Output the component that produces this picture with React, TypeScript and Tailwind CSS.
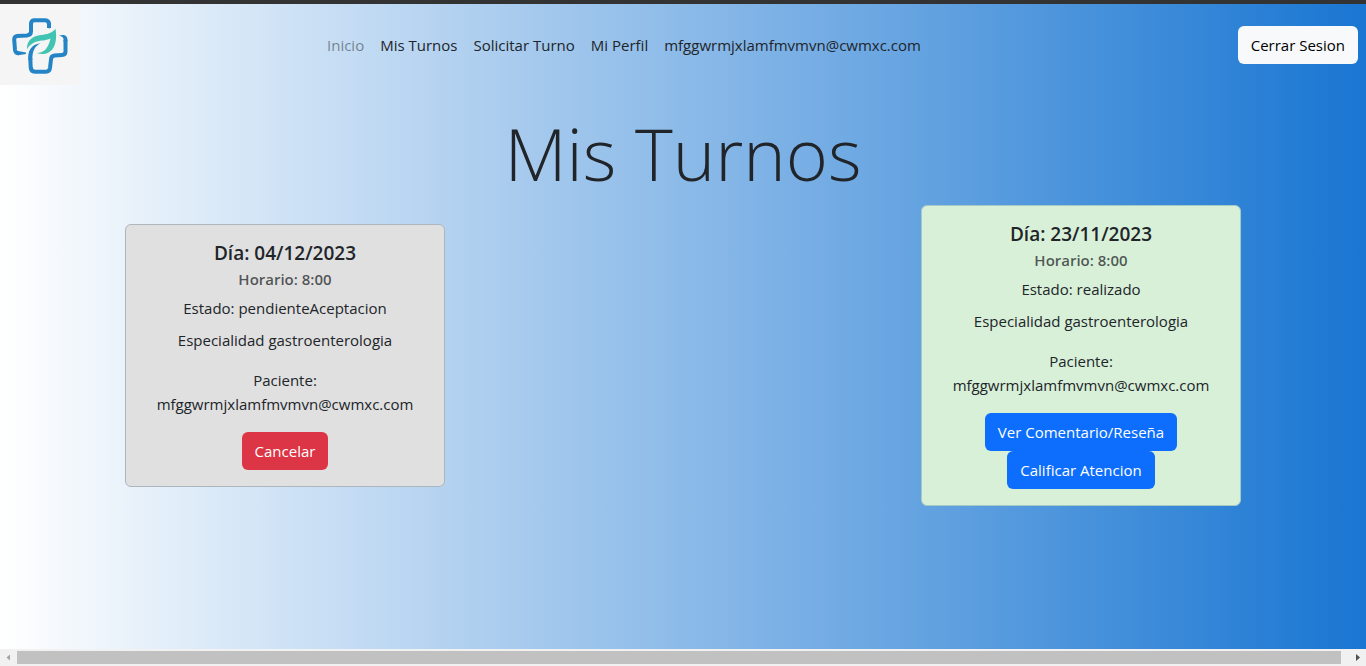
const btn = 'h-[38px] cursor-pointer rounded-md px-[13px] text-[15px] leading-6';

type Turno = {
  dia: string;
  estado: string;
  tone: string;
  actions: { label: string; tone: string }[];
};

const turnos: Turno[] = [
  {
    dia: '04/12/2023',
    estado: 'pendienteAceptacion',
    tone: 'bg-[#e0e0e0] border-[#adb5bd]',
    actions: [{ label: 'Cancelar', tone: 'bg-[#dc3545]' }],
  },
  {
    dia: '23/11/2023',
    estado: 'realizado',
    tone: 'bg-[#d8f0d8] border-[#a5c9c4]',
    actions: [
      { label: 'Ver Comentario/Reseña', tone: 'bg-[#0d6efd]' },
      { label: 'Calificar Atencion', tone: 'bg-[#0d6efd]' },
    ],
  },
];

function Logo() {
  return (
    <svg viewBox="8 12 64 66" className="h-[66px] w-16" fill="none" aria-label="Clínica" role="img">
      <path
        d="M49 28V24Q49 20.500 45 20.200L34 20.200Q31 20.500 31 24V31.500Q31 35 27 35.500L17 36Q14.200 36.500 14.200 39.500L15 50Q15.500 53.500 19 53.300"
        stroke="#2484c6"
        strokeWidth="4"
      />
      <path d="M47 20.500Q51 20.500 51 25L49.800 28.500L48 28ZM18 51L26 52.500V54L18 55.300Z" fill="#2484c6" />
      <path
        d="M65.500 40V51.500Q65.500 54.800 62 55L54.500 55.500Q51 56 51 59.500L50 68Q49.500 71.500 46 71.700L35 71.800Q31 71.500 30.700 67.500L30.300 58"
        stroke="#2484c6"
        strokeWidth="4"
      />
      <path
        d="M59 35.800C64 34 68 35.500 67.500 41L63.500 42C64 38 63 36.500 59 35.800ZM28.300 60C27.500 51 31 44.500 40.500 43.300C34.500 46.500 32.300 51 32.300 60Z"
        fill="#2484c6"
      />
      <path
        fillRule="evenodd"
        d="M27 49.500C26.500 40 33 35.800 41 35C47 34.300 52 33 55.500 28.700C57 38 56 47 50 51.500C46 54.500 41 54.800 37 53C43 53 48 49.500 50.500 38.500C44 42 33 38.500 27 49.500Z"
        fill="#41c4b1"
      />
    </svg>
  );
}

function Card({ turno }: { turno: Turno }) {
  return (
    <article
      className={`flex w-80 flex-col items-center rounded-md border p-4 text-center ${turno.tone}`}
    >
      <h2 className="text-[19px] leading-6 font-semibold">Día: {turno.dia}</h2>
      <h3 className="pt-1 text-[15px] leading-5 font-semibold text-[#212529]/75">Horario: 8:00</h3>
      <p className="pt-[7px] leading-6">Estado: {turno.estado}</p>
      <p className="pt-2 leading-6">Especialidad gastroenterologia</p>
      <p className="py-4 leading-6">
        Paciente:
        <br />
        mfggwrmjxlamfmvmvn@cwmxc.com
      </p>
      {turno.actions.map((a) => (
        <button key={a.label} type="button" className={`${btn} text-white ${a.tone}`}>
          {a.label}
        </button>
      ))}
    </article>
  );
}

export default function App() {
  return (
    <div className="flex min-h-screen flex-col border-t-4 border-[#333] bg-linear-to-r/srgb from-white to-[#1976d2] bg-origin-border font-['Open_Sans','Noto_Sans',sans-serif] text-[15px] text-[#212529]">
      <header className="flex items-center pr-2">
        <a href="#inicio" className="flex h-[81px] w-20 items-center bg-[#f5f5f5] pl-2">
          <Logo />
        </a>
        <nav className="flex flex-1 gap-4 pl-[247px] leading-6">
          <a href="#inicio" className="text-[#212529]/50">Inicio</a>
          <a href="#turnos">Mis Turnos</a>
          <a href="#solicitar">Solicitar Turno</a>
          <a href="#perfil">Mi Perfil</a>
          <a href="#cuenta">mfggwrmjxlamfmvmvn@cwmxc.com</a>
        </nav>
        <button type="button" className={`${btn} bg-[#f8f9fa] text-black`}>
          Cerrar Sesion
        </button>
      </header>
      <main className="flex-1">
        <h1 className="pt-5 text-center text-[72px] leading-24 font-light">Mis Turnos</h1>
        <section className="flex items-center justify-between px-[125px] pt-1">
          {turnos.map((t) => (
            <Card key={t.dia} turno={t} />
          ))}
        </section>
      </main>
      <div className="flex h-[17px] items-center bg-[#f1f1f1]" aria-hidden="true">
        <svg viewBox="0 0 17 17" className="size-[17px]">
          <path d="M10 5.500v6L6.500 8.500z" fill="#a3a3a3" />
        </svg>
        <div className="h-[13px] flex-1 bg-[#c1c1c1]" />
        <svg viewBox="0 0 25 17" className="h-[17px] w-[25px]">
          <path d="M15 5v7L19 8.500z" fill="#505050" />
        </svg>
      </div>
    </div>
  );
}
